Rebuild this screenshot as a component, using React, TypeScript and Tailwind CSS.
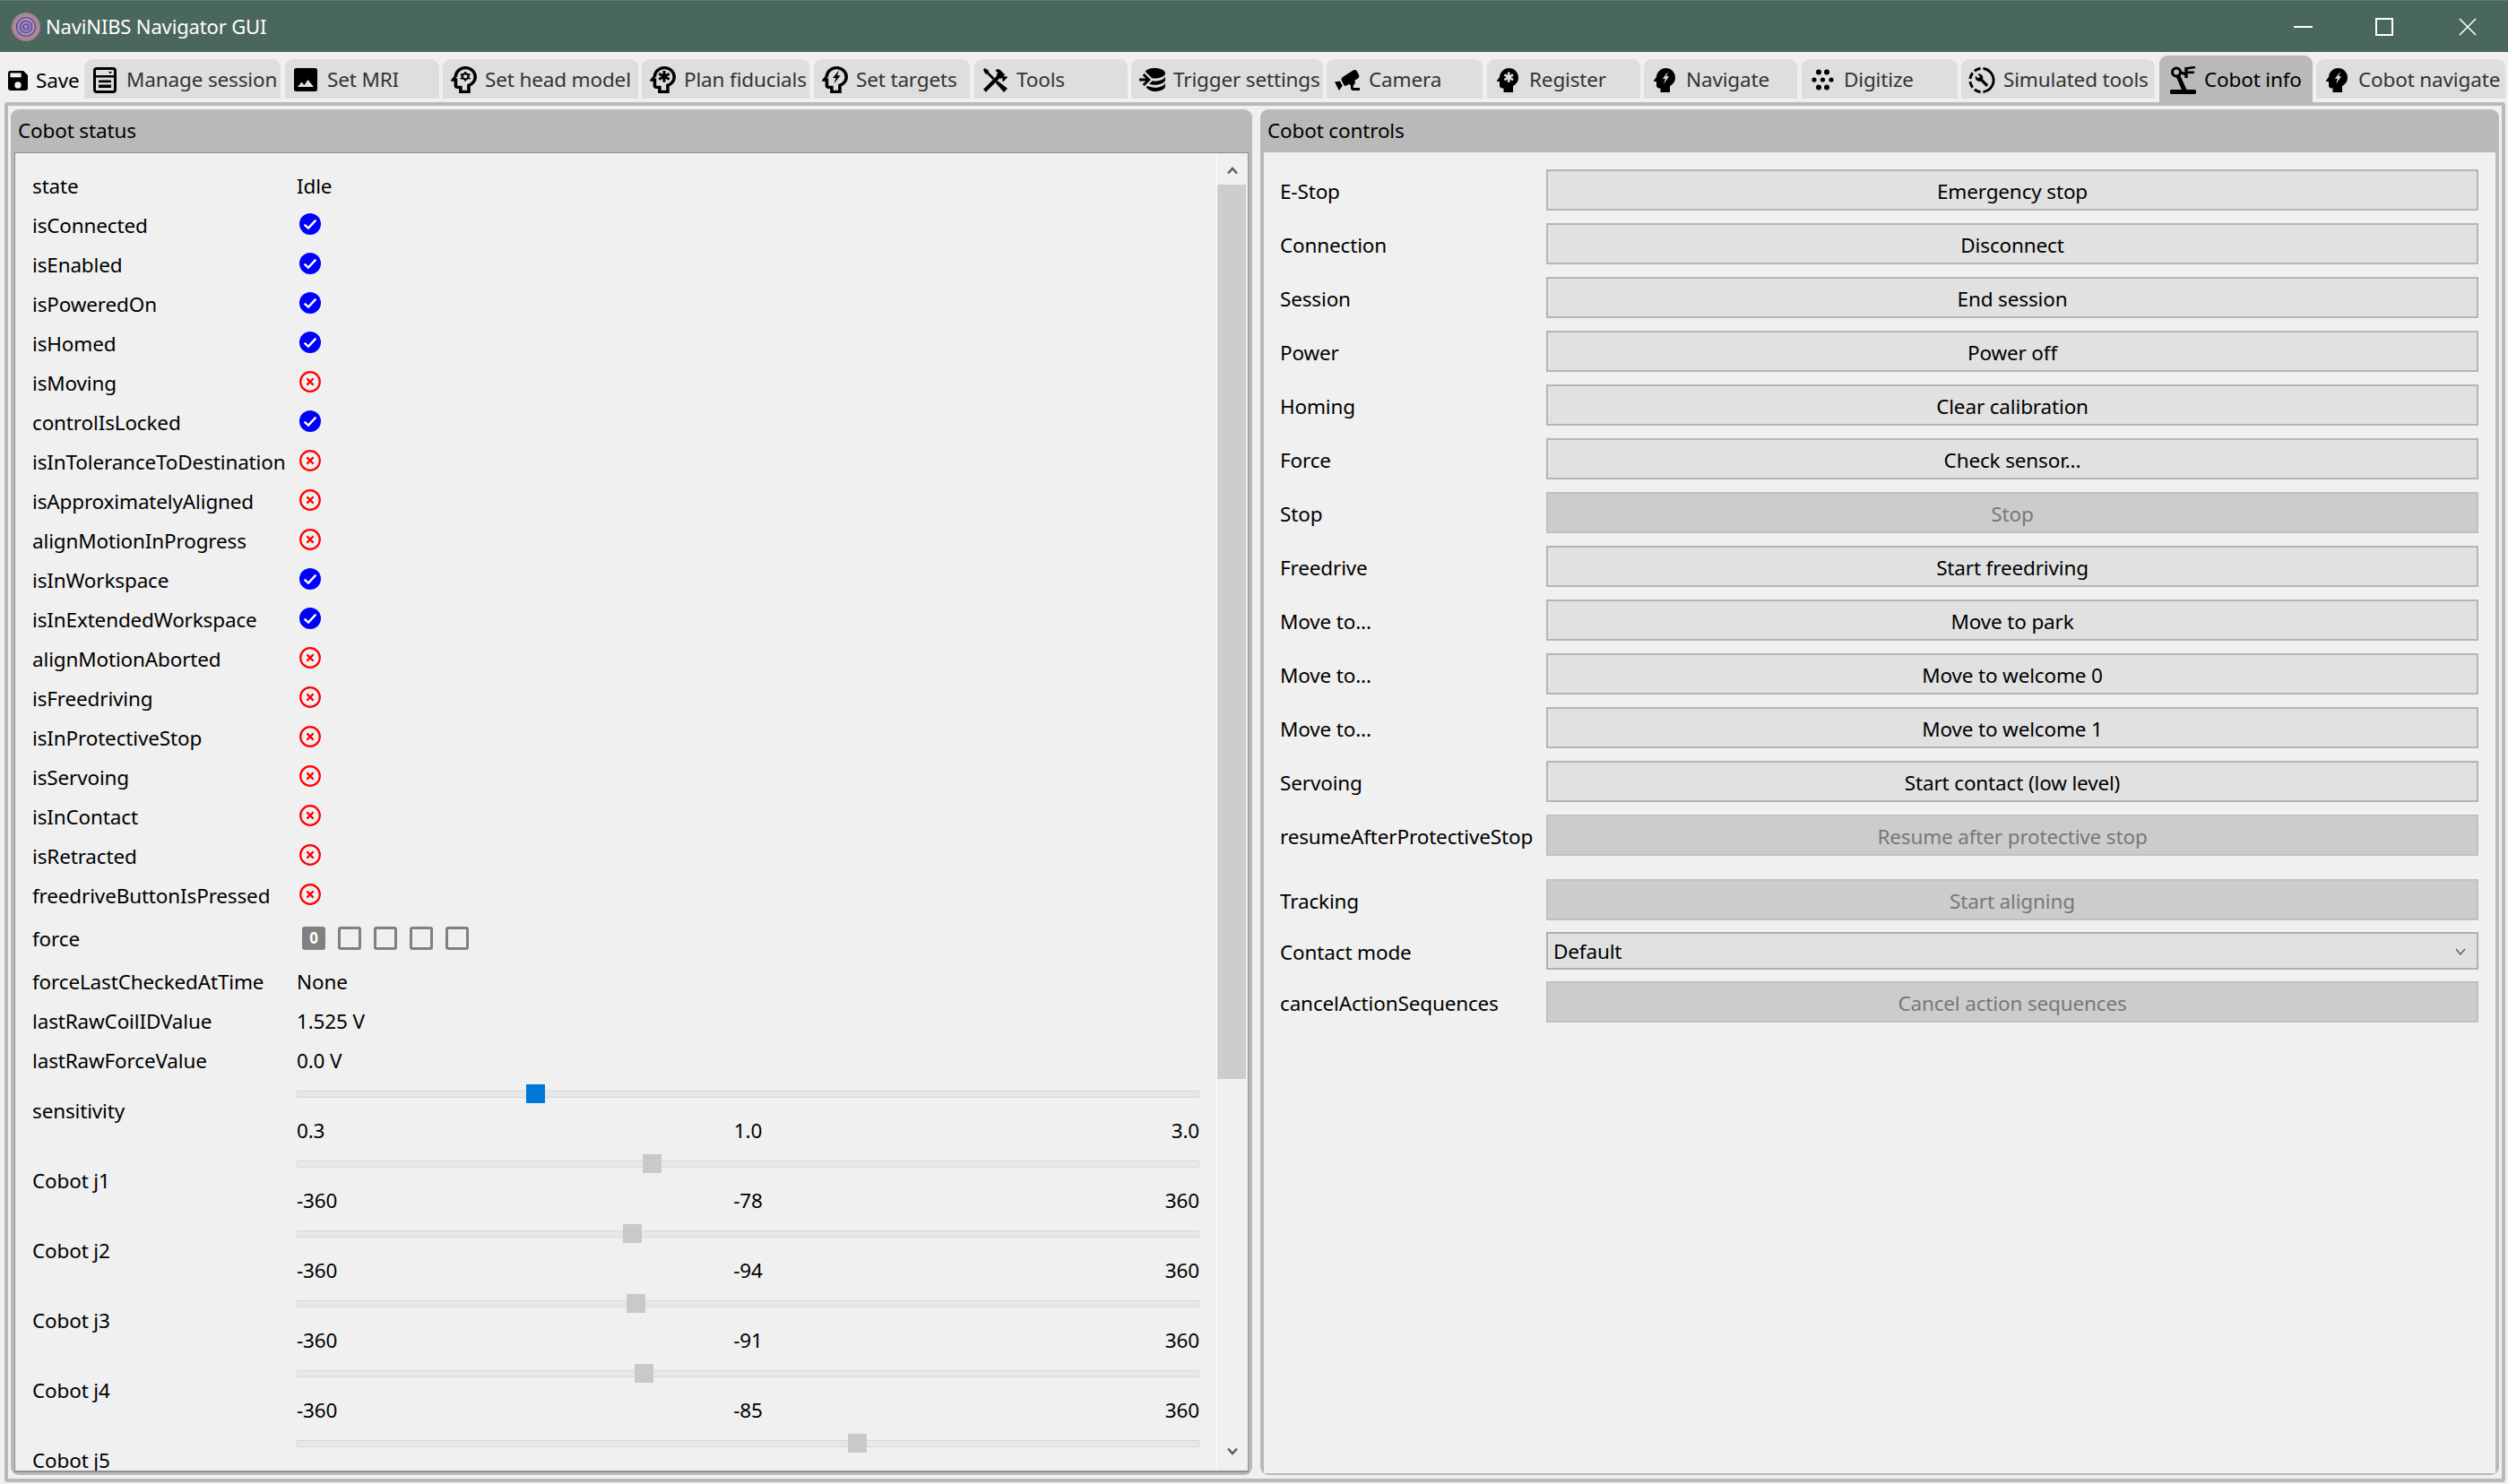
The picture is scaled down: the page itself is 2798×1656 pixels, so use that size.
const HEAD_FILLED = 'M13 3C9.23 3 6.19 5.95 6 9.66L4.08 12.19C3.84 12.5 4.08 13 4.5 13H6V16C6 17.11 6.89 18 8 18H9V21H16V16.31C18.37 15.19 20 12.8 20 10C20 6.14 16.88 3 13 3Z';
const HEAD_OUTLINE = HEAD_FILLED + 'M13 5C15.76 5 18 7.24 18 10C18 12.09 16.71 13.88 14.88 14.63L14 15V19H11V16H8V11H6.5L8 9.9C8 7.24 10.24 5 13 5Z';

const Asterisk = ({ color }: { color: string }) => (
  <g stroke={color} strokeWidth="1.7" strokeLinecap="butt">
    <path d="M12.8 6V13.6" />
    <path d="M9.6 7.9L16 11.7" />
    <path d="M16 7.9L9.6 11.7" />
  </g>
);

const BOLT = 'M14.6 5.6L10.6 10.8H12.6L11.4 14.6L15.4 9.2H13.4Z';

const HeadOutlineIcon = ({ kind }: { kind: 'cog' | 'star' | 'flash' }) => (
  <svg width="29" height="30" viewBox="4 3 16 18" preserveAspectRatio="none">
    <path d={HEAD_OUTLINE} fillRule="evenodd" fill="#000" />
    {kind === 'star' && <Asterisk color="#000" />}
    {kind === 'flash' && <path d={BOLT} fill="#000" />}
    {kind === 'cog' && (
      <g>
        <circle cx="12.9" cy="9.8" r="1.9" fill="none" stroke="#000" strokeWidth="1.3" />
        <g stroke="#000" strokeWidth="1">
          <path d="M12.9 6.6V8" />
          <path d="M12.9 11.6V13" />
          <path d="M9.9 8.2L11.2 8.9" />
          <path d="M14.6 10.7L15.9 11.4" />
          <path d="M15.9 8.2L14.6 8.9" />
          <path d="M11.2 10.7L9.9 11.4" />
        </g>
      </g>
    )}
  </svg>
);

const HeadFilledIcon = ({ kind }: { kind: 'star' | 'flash' }) => (
  <svg width="24" height="27" viewBox="4 3 16 18">
    <path d={HEAD_FILLED} fill="#000" />
    {kind === 'star' ? <Asterisk color="#dedede" /> : <path d={BOLT} fill="#dedede" />}
  </svg>
);

const SaveIcon = () => (
  <svg width="22" height="22" viewBox="3 3 18 18">
    <path fill="#000" d="M15,9H5V5H15M12,19A3,3 0 0,1 9,16A3,3 0 0,1 12,13A3,3 0 0,1 15,16A3,3 0 0,1 12,19M17,3H5C3.89,3 3,3.9 3,5V19A2,2 0 0,0 5,21H19A2,2 0 0,0 21,19V7L17,3Z" />
  </svg>
);

const CabinetIcon = () => (
  <svg width="26" height="29" viewBox="0 0 26 29">
    <rect x="1.5" y="1.5" width="23" height="26" rx="2.5" fill="none" stroke="#000" strokeWidth="3" />
    <rect x="2" y="9" width="22" height="2.5" fill="#000" />
    <path d="M17 5H21L19 7.5Z" fill="#000" />
    <rect x="6" y="14.5" width="14" height="2.6" fill="#000" />
    <rect x="6" y="19.5" width="14" height="3.5" fill="#000" />
  </svg>
);

const ImageIcon = () => (
  <svg width="26" height="26" viewBox="0 0 26 26">
    <rect width="26" height="26" rx="2.5" fill="#000" />
    <path d="M4 21L8.5 15.5L11.5 19L15.5 13L22 21Z" fill="#dedede" />
  </svg>
);

const ToolsIcon = () => (
  <svg width="27" height="27" viewBox="2 2 20 20">
    <path fill="#000" d="M2 19.63L13.43 8.2L12.72 7.5L14.14 6.07L12 3.89C13.2 2.7 15.09 2.7 16.27 3.89L19.87 7.5L18.45 8.91H21.29L22 9.62L18.45 13.21L17.74 12.5V9.62L16.27 11.04L15.56 10.33L4.13 21.76Z" />
    <path fill="#000" d="M3.2 2L6.4 4.1V5.4L11.2 10.2L9.8 11.6L5 6.8H3.7L2 3.4Z" />
    <path fill="#000" d="M13.6 12.4L22 18.8L19 22L12 14Z" />
  </svg>
);

const TriggerIcon = () => (
  <svg width="29" height="26" viewBox="0 3 20 18">
    <path fill="#000" d="M12,3C8.59,3 5.69,4.07 4.54,5.57L9.79,10.82C10.5,10.93 11.22,11 12,11C16.42,11 20,9.21 20,7C20,4.79 16.42,3 12,3M3.92,7.08L2.5,8.5L5,11H0V13H5L2.5,15.5L3.92,16.92L8.84,12L3.92,7.08M20,9C20,11.21 16.42,13 12,13C11.34,13 10.7,12.95 10.09,12.87L7.62,15.34C8.88,15.75 10.38,16 12,16C16.42,16 20,14.21 20,12V9M20,14C20,16.21 16.42,18 12,18C9.72,18 7.67,17.5 6.21,16.75L5.33,17.63C6.5,19.59 9.5,21 12,21C16.42,21 20,19.21 20,17V14Z" />
  </svg>
);

const CameraIcon = () => (
  <svg width="28" height="23" viewBox="2 5 20 15" preserveAspectRatio="none">
    <path fill="#000" d="M18.15,4.94C17.77,4.91 17.37,5 17,5.2L8.35,10.2C7.39,10.76 7.07,12 7.62,12.94L9.12,15.53C9.67,16.5 10.89,16.82 11.85,16.27L13.65,15.23C13.92,15.69 14.32,16.06 14.81,16.27V18.04C14.81,19.13 15.7,20 16.81,20H22V18.04H16.81V16.27C17.72,15.87 18.31,14.97 18.31,14C18.31,13.54 18.19,13.11 17.97,12.73L20.5,11.27C21.47,10.71 21.8,9.5 21.24,8.53L19.74,5.94C19.4,5.34 18.79,5 18.15,4.94M6.22,13.17L2,13.87L2.75,15.17L4.75,18.63L5.5,19.93L8.22,16.63L6.22,13.17Z" />
  </svg>
);

const DotsIcon = () => (
  <svg width="25" height="24" viewBox="0 0 25 24">
    <circle cx="8" cy="3.5" r="3" fill="#000" />
    <circle cx="17" cy="3.5" r="3" fill="#000" />
    <circle cx="3" cy="12" r="2.6" fill="#000" />
    <circle cx="12.5" cy="12" r="2.6" fill="#000" />
    <circle cx="22" cy="12" r="2.6" fill="#000" />
    <circle cx="8" cy="20.5" r="3" fill="#000" />
    <circle cx="17" cy="20.5" r="3" fill="#000" />
  </svg>
);

const WrenchIcon = () => (
  <svg width="30" height="29" viewBox="2 2 20 20">
    <path fill="#000" d="M13,2.03V2.05L13,4.05C17.39,4.59 20.5,8.58 19.96,12.97C19.5,16.61 16.64,19.5 13,19.93V21.93C18.5,21.38 22.5,16.5 21.95,11C21.5,6.25 17.73,2.5 13,2.03M11,2.06C9.05,2.25 7.19,3 5.67,4.26L7.1,5.74C8.22,4.84 9.57,4.26 11,4.06V2.06M4.26,5.67C3,7.19 2.25,9.04 2.05,11H4.05C4.24,9.58 4.8,8.23 5.69,7.1L4.26,5.67M2.06,13C2.26,14.96 3.03,16.81 4.27,18.33L5.69,16.9C4.81,15.77 4.24,14.42 4.06,13H2.06M7.1,18.37L5.67,19.74C7.18,21 9.04,21.79 11,22V20C9.58,19.82 8.23,19.25 7.1,18.37M16.82,15.19L12.71,11.08C13.12,10.04 12.89,8.82 12.03,7.97C11.13,7.06 9.78,6.88 8.69,7.38L10.63,9.32L9.28,10.68L7.29,8.73C6.75,9.82 7,11.17 7.88,12.08C8.74,12.94 9.96,13.16 11,12.76L15.11,16.86C15.29,17.05 15.56,17.05 15.74,16.86L16.78,15.83C17,15.65 17,15.33 16.82,15.19Z" />
  </svg>
);

const RobotIcon = () => (
  <svg width="29" height="31" viewBox="0 0 29 31">
    <rect x="0" y="26" width="29" height="5" rx="1.5" fill="#000" />
    <path d="M6.5 11L11 9.5L18.5 26H13Z" fill="#000" />
    <circle cx="7" cy="6.5" r="4.5" fill="none" stroke="#000" strokeWidth="3" />
    <path d="M11 6.5L18 9" stroke="#000" strokeWidth="3" fill="none" />
    <path d="M18 1V13" stroke="#000" strokeWidth="3.4" fill="none" />
    <path d="M17 2.5L28 1" stroke="#000" strokeWidth="2.6" fill="none" />
    <path d="M17 6.8H27" stroke="#000" strokeWidth="2.6" fill="none" />
  </svg>
);

const CheckIcon = () => (
  <svg width="24" height="24" viewBox="0 0 24 24">
    <circle cx="12" cy="12" r="12" fill="#0000ff" />
    <path d="M5.6 12.6L10 16.6L18.4 7.6" fill="none" stroke="#fff" strokeWidth="2.4" />
  </svg>
);

const CrossIcon = () => (
  <svg width="24" height="24" viewBox="0 0 24 24">
    <circle cx="12" cy="12" r="10.8" fill="none" stroke="#ff0000" strokeWidth="2.2" />
    <path d="M8.4 8.4L15.6 15.6M15.6 8.4L8.4 15.6" fill="none" stroke="#ff0000" strokeWidth="2.2" />
  </svg>
);

const AppLogo = () => (
  <svg width="32" height="32" viewBox="0 0 32 32">
    <circle cx="16" cy="16" r="16" fill="#a78492" />
    <circle cx="16" cy="16" r="13" fill="#b08d99" />
    <circle cx="16" cy="16" r="10.5" fill="none" stroke="#4a3fc4" strokeWidth="1.2" />
    <circle cx="16" cy="16" r="6.5" fill="#a98a9c" stroke="#3d3ad2" strokeWidth="1.2" />
    <circle cx="16" cy="16" r="3" fill="none" stroke="#3d3ad2" strokeWidth="1.2" />
  </svg>
);

const tabs = [
  { label: 'Manage session', icon: <CabinetIcon />, cls: 'w-[219px] mr-[5px]' },
  { label: 'Set MRI', icon: <ImageIcon />, cls: 'w-[172px] mr-[4px]' },
  { label: 'Set head model', icon: <HeadOutlineIcon kind="cog" />, cls: 'w-[218px] mr-[4px]' },
  { label: 'Plan fiducials', icon: <HeadOutlineIcon kind="star" />, cls: 'w-[187px] mr-[5px]' },
  { label: 'Set targets', icon: <HeadOutlineIcon kind="flash" />, cls: 'w-[174px] mr-[5px]' },
  { label: 'Tools', icon: <ToolsIcon />, cls: 'w-[171px] mr-[4px]' },
  { label: 'Trigger settings', icon: <TriggerIcon />, cls: 'w-[214px] mr-[4px]' },
  { label: 'Camera', icon: <CameraIcon />, cls: 'w-[174px] mr-[5px]' },
  { label: 'Register', icon: <HeadFilledIcon kind="star" />, cls: 'w-[171px] mr-[4px]' },
  { label: 'Navigate', icon: <HeadFilledIcon kind="flash" />, cls: 'w-[171px] mr-[5px]' },
  { label: 'Digitize', icon: <DotsIcon />, cls: 'w-[174px] mr-[4px]' },
  { label: 'Simulated tools', icon: <WrenchIcon />, cls: 'w-[216px] mr-[5px]' },
  { label: 'Cobot info', icon: <RobotIcon />, cls: 'w-[171px] mr-[4px]', active: true },
  { label: 'Cobot navigate', icon: <HeadFilledIcon kind="flash" />, cls: 'w-[211px]' },
];

const flags: [string, boolean][] = [
  ['isConnected', true],
  ['isEnabled', true],
  ['isPoweredOn', true],
  ['isHomed', true],
  ['isMoving', false],
  ['controlIsLocked', true],
  ['isInToleranceToDestination', false],
  ['isApproximatelyAligned', false],
  ['alignMotionInProgress', false],
  ['isInWorkspace', true],
  ['isInExtendedWorkspace', true],
  ['alignMotionAborted', false],
  ['isFreedriving', false],
  ['isInProtectiveStop', false],
  ['isServoing', false],
  ['isInContact', false],
  ['isRetracted', false],
  ['freedriveButtonIsPressed', false],
];

const textRows = [
  ['forceLastCheckedAtTime', 'None'],
  ['lastRawCoilIDValue', '1.525 V'],
  ['lastRawForceValue', '0.0 V'],
];

type SliderData = { label: string; min?: string; mid?: string; max?: string; frac: number; active?: boolean };

const sliders: SliderData[] = [
  { label: 'sensitivity', min: '0.3', mid: '1.0', max: '3.0', frac: 0.2594, active: true },
  { label: 'Cobot j1', min: '-360', mid: '-78', max: '360', frac: 282 / 720 },
  { label: 'Cobot j2', min: '-360', mid: '-94', max: '360', frac: 266 / 720 },
  { label: 'Cobot j3', min: '-360', mid: '-91', max: '360', frac: 269 / 720 },
  { label: 'Cobot j4', min: '-360', mid: '-85', max: '360', frac: 275 / 720 },
  { label: 'Cobot j5', frac: 449 / 720 },
];

const controls: { label: string; text: string; disabled?: boolean }[] = [
  { label: 'E-Stop', text: 'Emergency stop' },
  { label: 'Connection', text: 'Disconnect' },
  { label: 'Session', text: 'End session' },
  { label: 'Power', text: 'Power off' },
  { label: 'Homing', text: 'Clear calibration' },
  { label: 'Force', text: 'Check sensor...' },
  { label: 'Stop', text: 'Stop', disabled: true },
  { label: 'Freedrive', text: 'Start freedriving' },
  { label: 'Move to...', text: 'Move to park' },
  { label: 'Move to...', text: 'Move to welcome 0' },
  { label: 'Move to...', text: 'Move to welcome 1' },
  { label: 'Servoing', text: 'Start contact (low level)' },
  { label: 'resumeAfterProtectiveStop', text: 'Resume after protective stop', disabled: true },
];

const Row = ({ label, children }: { label: string; children: React.ReactNode }) => (
  <div className="flex h-[44px] shrink-0 items-center">
    <div className="w-[295px] shrink-0 pt-[3px]">{label}</div>
    <div className="flex-1">{children}</div>
  </div>
);

const Slider = ({ s }: { s: SliderData }) => (
  <div className="flex h-[78px] shrink-0">
    <div className="w-[295px] shrink-0 pt-[17px]">{s.label}</div>
    <div className="flex-1 pt-[4px]">
      <div className="relative flex h-[21px] items-center">
        <div className="h-[8px] w-full border border-[#d6d8d8] bg-[#e7e9e9]" />
        <div
          className={`absolute top-0 h-[21px] w-[21px] ${s.active ? 'bg-[#0078d7]' : 'bg-[#c9c9c9]'}`}
          style={{ left: `calc((100% - 21px) * ${s.frac})` }}
        />
      </div>
      {s.min && (
        <div className="mt-[14px] grid h-[32px] grid-cols-3 items-center">
          <div>{s.min}</div>
          <div className="text-center">{s.mid}</div>
          <div className="text-right">{s.max}</div>
        </div>
      )}
    </div>
  </div>
);

const Chevron = ({ down }: { down?: boolean }) => (
  <svg width="12" height="9" viewBox="0 0 12 9">
    <path d={down ? 'M1 1.5L6 7L11 1.5' : 'M1 7.5L6 2L11 7.5'} fill="none" stroke="#606060" strokeWidth="2.6" />
  </svg>
);

const ControlButton = ({ text, disabled }: { text: string; disabled?: boolean }) => (
  <button
    className={`h-[46px] w-[1040px] border-2 pt-[3px] text-center ${
      disabled ? 'border-[#c0c0c0] bg-[#cccccc] text-[#787878]' : 'border-[#b5b5b5] bg-[#e1e1e1] text-black'
    }`}
  >
    {text}
  </button>
);

export default function App() {
  return (
    <div className="flex h-[1656px] w-[2798px] flex-col overflow-hidden bg-[#f0f0f0] font-['Noto_Sans','Open_Sans',sans-serif] text-[22.5px] tracking-[-0.15px] text-black">
      {/* title bar */}
      <div className="flex h-[58px] shrink-0 items-center border-t border-[#5f7c73] bg-[#4a675e] text-white">
        <div className="ml-[13px] mr-[6px] flex">
          <AppLogo />
        </div>
        <span className="text-[22px]">NaviNIBS Navigator GUI</span>
        <div className="flex-1" />
        <div className="mr-[70px] h-[2px] w-[21px] bg-white" />
        <div className="mr-[73px] h-[20px] w-[20px] border-2 border-white" />
        <svg width="20" height="20" viewBox="0 0 20 20" className="mr-[35px]">
          <path d="M1 1L19 19M19 1L1 19" stroke="#fff" strokeWidth="1.6" fill="none" />
        </svg>
      </div>

      {/* toolbar and tabs */}
      <div className="flex h-[56px] shrink-0 items-start">
        <div className="flex h-[64px] w-[94px] items-center pl-[9px]">
          <SaveIcon />
          <span className="ml-[9px]">Save</span>
        </div>
        {tabs.map(t => (
          <div
            key={t.label}
            className={`flex items-center rounded-t-[9px] pt-[2px] ${t.cls} ${
              t.active ? 'mt-[4px] h-[52px] bg-[#b9b9b9] pl-[10px] text-black' : 'mt-[8px] h-[44px] bg-[#dedede] pl-[7px] text-[#333333]'
            }`}
          >
            <div className="mr-[8px] flex w-[32px] shrink-0 justify-center">{t.icon}</div>
            <span className="whitespace-nowrap">{t.label}</span>
          </div>
        ))}
      </div>

      {/* tab pane */}
      <div className="ml-[5px] flex h-[1540px] w-[2790px] shrink-0 gap-[9px] rounded-[3px] border-4 border-[#b9b9b9] pb-[4px] pl-[3px] pr-[3px] pt-[4px]">
        {/* status group */}
        <div className="flex w-[1385px] shrink-0 flex-col rounded-[9px] bg-[#b9b9b9] px-[4px] pb-[3px]">
          <div className="flex h-[48px] shrink-0 items-center pl-[4px]">Cobot status</div>
          <div className="flex min-h-0 flex-1 overflow-hidden border border-b-2 border-[#8e8e9c] bg-[#f0f0f0]">
            <div className="flex w-[1340px] shrink-0 flex-col overflow-hidden pl-[19px] pr-[19px] pt-[13px]">
              <Row label="state">
                <div className="pt-[3px]">Idle</div>
              </Row>
              {flags.map(([name, ok]) => (
                <Row key={name} label={name}>
                  <div className="ml-[3px] flex">{ok ? <CheckIcon /> : <CrossIcon />}</div>
                </Row>
              ))}
              <div className="flex h-[54px] shrink-0 items-center">
                <div className="w-[295px] shrink-0 pt-[1px]">force</div>
                <div className="ml-[6px] flex gap-[14px]">
                  <div className="flex h-[26px] w-[26px] items-center justify-center rounded-[3px] bg-[#808080] text-[17px] font-bold text-white">
                    0
                  </div>
                  <div className="h-[26px] w-[26px] rounded-[3px] border-[3px] border-[#808080]" />
                  <div className="h-[26px] w-[26px] rounded-[3px] border-[3px] border-[#808080]" />
                  <div className="h-[26px] w-[26px] rounded-[3px] border-[3px] border-[#808080]" />
                  <div className="h-[26px] w-[26px] rounded-[3px] border-[3px] border-[#808080]" />
                </div>
              </div>
              {textRows.map(([k, v]) => (
                <div key={k} className="flex h-[44px] shrink-0 items-center">
                  <div className="w-[295px] shrink-0">{k}</div>
                  <div className="flex-1">{v}</div>
                </div>
              ))}
              {sliders.map(s => (
                <Slider key={s.label} s={s} />
              ))}
            </div>
            {/* scrollbar */}
            <div className="flex flex-1 flex-col border-l border-white">
              <div className="flex h-[35px] shrink-0 justify-center pt-[15px]">
                <Chevron />
              </div>
              <div className="mr-[2px] h-[998px] shrink-0 bg-[#cdcdcd]" />
              <div className="flex-1" />
              <div className="flex h-[35px] shrink-0 justify-center pt-[9px]">
                <Chevron down />
              </div>
            </div>
          </div>
        </div>

        {/* controls group */}
        <div className="flex w-[1382px] shrink-0 flex-col rounded-[9px] bg-[#b9b9b9] px-[4px] pb-[2px]">
          <div className="flex h-[48px] shrink-0 items-center pl-[4px]">Cobot controls</div>
          <div className="min-h-0 flex-1 bg-[#f0f0f0] pl-[18px] pt-[19px]">
            <div className="flex flex-col gap-[14px]">
              {controls.map((c, i) => (
                <div key={i} className="flex items-center">
                  <div className="w-[297px] shrink-0 whitespace-nowrap pt-[3px]">{c.label}</div>
                  <ControlButton text={c.text} disabled={c.disabled} />
                </div>
              ))}
            </div>
            <div className="mt-[26px] flex flex-col gap-[13px]">
              <div className="flex items-center">
                <div className="w-[297px] shrink-0 pt-[3px]">Tracking</div>
                <ControlButton text="Start aligning" disabled />
              </div>
              <div className="flex items-center">
                <div className="w-[297px] shrink-0 pt-[3px]">Contact mode</div>
                <div className="flex h-[42px] w-[1040px] items-center justify-between border-2 border-[#b0b0b0] bg-[#e1e1e1] pl-[6px] pr-[12px] pt-[2px]">
                  <span>Default</span>
                  <svg width="12" height="8" viewBox="0 0 12 8">
                    <path d="M1 1L6 7L11 1" fill="none" stroke="#555" strokeWidth="1.2" />
                  </svg>
                </div>
              </div>
              <div className="flex items-center">
                <div className="w-[297px] shrink-0 pt-[3px]">cancelActionSequences</div>
                <ControlButton text="Cancel action sequences" disabled />
              </div>
            </div>
          </div>
        </div>
      </div>
    </div>
  );
}
